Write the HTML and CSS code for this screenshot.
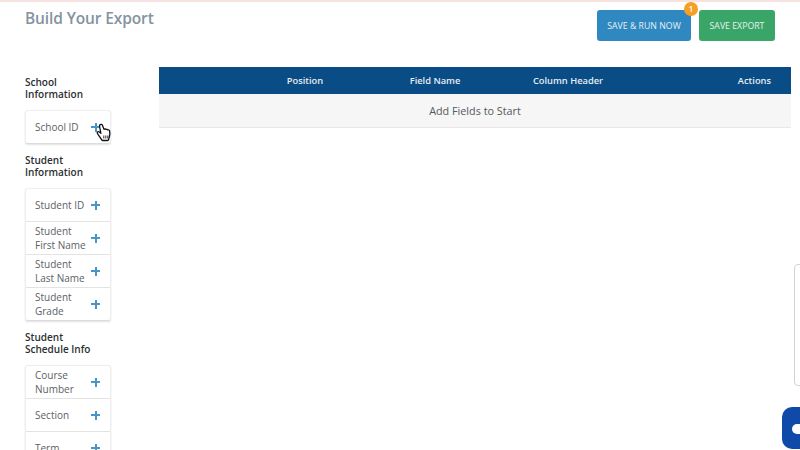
FILE: index.html
```html
<!DOCTYPE html>
<html lang="en">

<head>
    <meta charset="UTF-8">
    <title>Build Your Export</title>
    <link rel="stylesheet" href="styles.css">
</head>

<body>

    <div class="page">
        <div class="top-bar">
            <h1 class="page-title">Build Your Export</h1>
            <div class="top-actions">
                <button class="btn btn-run">Save &amp; Run Now<span class="badge">1</span></button>
                <button class="btn btn-save">Save Export</button>
            </div>
        </div>

        <div class="builder">
            <div class="sidebar">
                <h2 class="group-title">School<br>Information</h2>
                <div class="field-list">
                    <div class="field-row">
                        <span class="field-name">School ID</span>
                        <span class="plus"></span>
                        <!-- hand cursor caught in the recording -->
                        <svg class="cursor" viewBox="0 0 16 20" width="16" height="20">
                            <path d="M4.2 1.6c.9-.6 1.9-.2 2.3.8l1.5 3.9c.5-.7 1.6-.6 2 .2.6-.5 1.6-.3 1.9.5.7-.3 1.500.1 1.700.9.400 1.800.300 3.800-.200 5.600l-.800 3.200c-.100.500-.500.800-1 .800H6.800c-.400 0-.800-.200-1-.600L2.500 12.100c-.500-.800-1.200-1.500-1.300-2.400-.100-.900.900-1.400 1.700-.900l2 1.500L3.600 3.500c-.200-.700 0-1.500.600-1.900z" fill="#fff" stroke="#111" stroke-width="1.300" stroke-linejoin="round"/>
                            <path d="M7.800 12.500v3M9.800 12.500v3M11.800 12.500v3" stroke="#333" stroke-width="1"/>
                        </svg>
                    </div>
                </div>

                <h2 class="group-title">Student<br>Information</h2>
                <div class="field-list">
                    <div class="field-row">
                        <span class="field-name">Student ID</span>
                        <span class="plus"></span>
                    </div>
                    <div class="field-row">
                        <span class="field-name">Student<br>First Name</span>
                        <span class="plus"></span>
                    </div>
                    <div class="field-row">
                        <span class="field-name">Student<br>Last Name</span>
                        <span class="plus"></span>
                    </div>
                    <div class="field-row">
                        <span class="field-name">Student<br>Grade</span>
                        <span class="plus"></span>
                    </div>
                </div>

                <h2 class="group-title">Student<br>Schedule Info</h2>
                <div class="field-list">
                    <div class="field-row">
                        <span class="field-name">Course<br>Number</span>
                        <span class="plus"></span>
                    </div>
                    <div class="field-row">
                        <span class="field-name">Section</span>
                        <span class="plus"></span>
                    </div>
                    <div class="field-row">
                        <span class="field-name">Term</span>
                        <span class="plus"></span>
                    </div>
                </div>
            </div>

            <div class="table">
                <div class="table-head">
                    <span></span>
                    <span>Position</span>
                    <span>Field Name</span>
                    <span>Column Header</span>
                    <span class="col-actions">Actions</span>
                </div>
                <div class="table-empty">Add Fields to Start</div>
            </div>
        </div>
    </div>

    <div class="side-tab"></div>
    <div class="chat-bubble"><span class="chat-dot"></span></div>

</body>

</html>
```

FILE: styles.css
```css
body,
html {
    margin: 0;
    padding: 0;
    height: 100%;
    font-family: "Open Sans", Arial, sans-serif;
    background-color: #fff;
    overflow: hidden; /* Prevent scrolling */
}

.page {
    height: 100%;
    box-sizing: border-box;
    border-top: 2px solid #f6e3e1;
    padding: 8px 9px 0 25px;
}

.top-bar {
    display: flex;
    justify-content: space-between;
    align-items: flex-start;
    padding-right: 16px;
    height: 57px;
}

.page-title {
    margin: 0;
    font-size: 15.5px;
    letter-spacing: -0.12px;
    line-height: 16px;
    font-weight: 600;
    color: #84939f;
}

.top-actions {
    display: flex;
    gap: 8px;
}

.btn {
    position: relative;
    height: 31px;
    padding: 0;
    border: none;
    border-radius: 3px;
    font-family: inherit;
    font-size: 8.75px;
    text-transform: uppercase;
    color: #e8f1f5;
}

.btn-run {
    width: 94px;
    background-color: #2f88c0;
}

.btn-save {
    width: 76px;
    background-color: #39a566;
}

.badge {
    position: absolute;
    top: -8px;
    right: -7px;
    width: 14px;
    height: 14px;
    border-radius: 50%;
    background-color: #f5a025;
    color: #fff;
    font-size: 8px;
    font-weight: 600;
    line-height: 14px;
    text-align: center;
}

.builder {
    display: flex;
    gap: 48px;
}

.sidebar {
    width: 86px;
    flex-shrink: 0;
    padding-top: 9px;
}

.group-title {
    margin: 0 0 10px;
    font-size: 10px;
    line-height: 12px;
    font-weight: 600;
    color: #2b2f33;
}

.field-list {
    margin-bottom: 10px;
    background-color: #fff;
    border: 1px solid #eeeeee;
    border-bottom-color: #dcdcdc;
    border-radius: 3px;
    box-shadow: 0 1px 2px rgba(0, 0, 0, 0.12);
}

.field-row {
    position: relative;
    display: flex;
    align-items: center;
    justify-content: space-between;
    height: 32px;
    padding: 0 10px 0 9px;
    border-bottom: 1px solid #e3e3e3;
    font-size: 10px;
    line-height: 14px;
    color: #5c6166;
}

.field-row:last-child {
    border-bottom: none;
}

.plus {
    position: relative;
    width: 9px;
    height: 9px;
    flex-shrink: 0;
    background:
        linear-gradient(#4796c7, #4796c7) center / 9px 2px no-repeat,
        linear-gradient(#4796c7, #4796c7) center / 2px 9px no-repeat;
}

.cursor {
    position: absolute;
    left: 70px;
    top: 12px;
}

.table {
    flex: 1;
}

.table-head {
    display: grid;
    grid-template-columns: 81px 130px 130px 136px 1fr;
    align-items: center;
    height: 27px;
    padding-right: 20px;
    background-color: #0a4c86;
    font-size: 9.3px;
    font-weight: 600;
    color: #e6edf3;
    text-align: center;
}

.col-actions {
    text-align: right;
}

.table-empty {
    height: 33px;
    line-height: 33px;
    background-color: #f6f6f6;
    border-bottom: 1px solid #e8e8e8;
    font-size: 10.8px;
    color: #55595d;
    text-align: center;
}

.side-tab {
    position: fixed;
    top: 264px;
    right: -10px;
    width: 14px;
    height: 120px;
    border: 1px solid #d2d2d2;
    border-radius: 4px;
}

.chat-bubble {
    position: fixed;
    top: 407px;
    right: -20px;
    width: 38px;
    height: 42px;
    border-radius: 10px;
    background-color: #0f4aa8;
}

.chat-dot {
    position: absolute;
    top: 17px;
    left: 10px;
    width: 14px;
    height: 10px;
    border-radius: 5px;
    background-color: #fff;
}
```
